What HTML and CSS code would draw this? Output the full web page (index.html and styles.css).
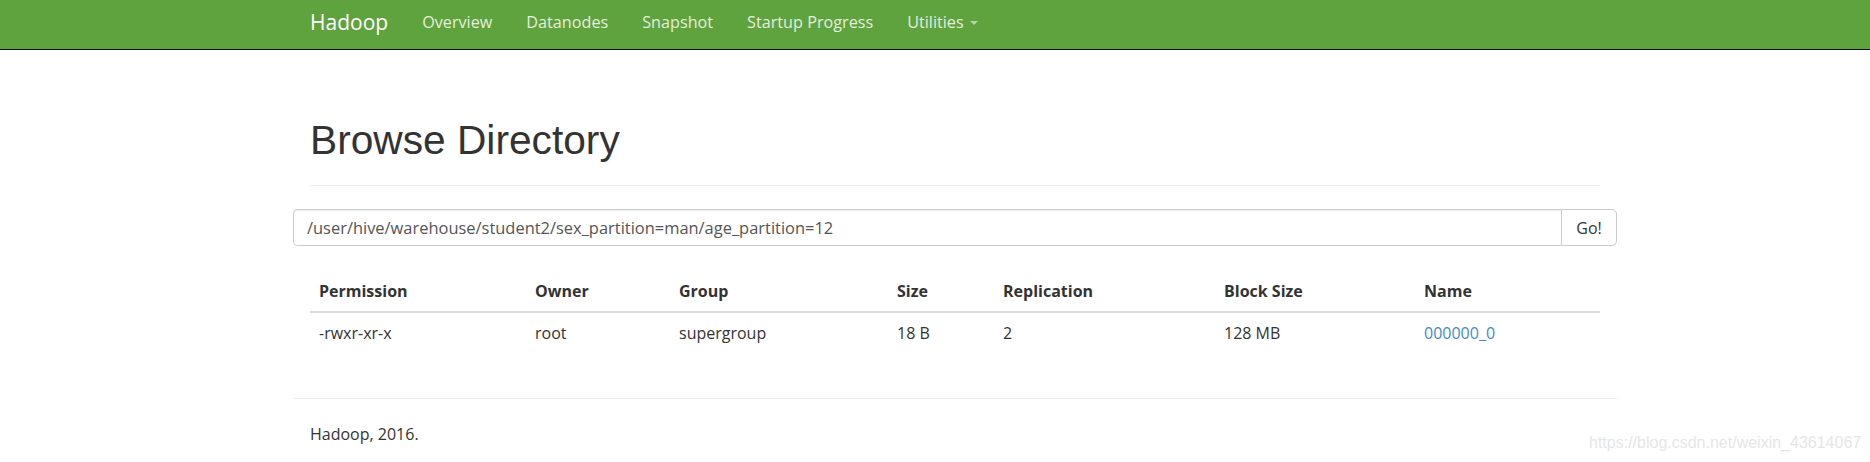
FILE: index.html
```html
<!DOCTYPE html>
<html lang="en">
<head>
<meta charset="utf-8">
<title>Browsing HDFS</title>
<link rel="stylesheet" href="styles.css">
</head>
<body>
<header class="navbar">
  <div class="container nav-inner">
    <a class="brand" href="#">Hadoop</a>
    <ul class="nav">
      <li><a href="#">Overview</a></li>
      <li><a href="#">Datanodes</a></li>
      <li><a href="#">Snapshot</a></li>
      <li><a href="#">Startup Progress</a></li>
      <li><a href="#" class="dropdown">Utilities <span class="caret"></span></a></li>
    </ul>
  </div>
</header>

<main class="container">
  <div class="page-header">
    <h1>Browse Directory</h1>
  </div>

  <form class="input-group">
    <input class="path-input" type="text" value="/user/hive/warehouse/student2/sex_partition=man/age_partition=12">
    <button class="go-btn" type="button">Go!</button>
  </form>

  <div class="table-wrap">
    <table class="listing">
      <thead>
        <tr>
          <th class="c-perm">Permission</th>
          <th class="c-owner">Owner</th>
          <th class="c-group">Group</th>
          <th class="c-size">Size</th>
          <th class="c-rep">Replication</th>
          <th class="c-block">Block Size</th>
          <th class="c-name">Name</th>
        </tr>
      </thead>
      <tbody>
        <tr>
          <td>-rwxr-xr-x</td>
          <td>root</td>
          <td>supergroup</td>
          <td>18 B</td>
          <td>2</td>
          <td>128 MB</td>
          <td><a href="#">000000_0</a></td>
        </tr>
      </tbody>
    </table>
  </div>

  <hr class="footer-rule">
  <footer class="footer">Hadoop, 2016.</footer>
</main>

<div class="watermark">https://blog.csdn.net/weixin_43614067</div>
</body>
</html>
```

FILE: styles.css
```css
html, body {
  margin: 0;
  padding: 0;
}

body {
  font-family: "Open Sans", "Noto Sans", sans-serif;
  font-size: 16px;
  line-height: 22px;
  color: #333;
  background: #fff;
  position: relative;
  min-height: 462px;
}

a {
  color: #428bca;
  text-decoration: none;
}

.container {
  width: 1324px;
  margin-left: 293px;
  box-sizing: border-box;
}

/* Navbar */
.navbar {
  background: #5fa33e;
  height: 49px;
  border-bottom: 1px solid #111;
}

.nav-inner {
  display: flex;
  align-items: center;
  height: 49px;
  padding: 0 17px;
  padding-bottom: 6px;
  box-sizing: border-box;
}

.brand {
  color: #fff;
  font-size: 21px;
  line-height: 24px;
  padding-right: 17px;
}

.nav {
  display: flex;
  list-style: none;
  margin: 0;
  padding: 0;
}

.nav a {
  display: block;
  color: #e4eedd;
  font-size: 16.2px;
  line-height: 22px;
  padding: 0 17px;
}

.caret {
  display: inline-block;
  width: 0;
  height: 0;
  margin-left: 2px;
  vertical-align: middle;
  border-top: 4px solid #b5d4a5;
  border-left: 4px solid transparent;
  border-right: 4px solid transparent;
}

/* Page header */
.page-header {
  margin: 68px 17px 0;
  padding-bottom: 22px;
  border-bottom: 1px solid #eee;
}

.page-header h1 {
  margin: 0;
  font-family: "Liberation Sans", Arial, sans-serif;
  font-weight: normal;
  font-size: 40.7px;
  line-height: 45px;
  color: #333;
}

/* Input group */
.input-group {
  display: flex;
  margin: 23px 0 0;
  height: 37px;
}

.path-input {
  flex: 1;
  height: 37px;
  box-sizing: border-box;
  border: 1px solid #ccc;
  border-right: none;
  border-radius: 5px 0 0 5px;
  padding: 0 13px;
  font-family: "Open Sans", "Noto Sans", sans-serif;
  font-size: 16.45px;
  color: #555;
  box-shadow: inset 0 1px 1px rgba(0, 0, 0, 0.075);
  outline: none;
}

.go-btn {
  width: 56px;
  height: 37px;
  box-sizing: border-box;
  border: 1px solid #ccc;
  border-radius: 0 5px 5px 0;
  background: #fff;
  color: #333;
  font-family: "Open Sans", "Noto Sans", sans-serif;
  font-size: 16px;
  padding: 0;
}

/* Table */
.table-wrap {
  padding: 0 17px;
  margin-top: 25px;
}

.listing {
  width: 100%;
  border-collapse: collapse;
  table-layout: fixed;
}

.listing th,
.listing td {
  text-align: left;
  padding: 9px 9px;
  line-height: 22px;
  vertical-align: top;
  box-sizing: border-box;
}

.listing th {
  font-weight: bold;
  border-bottom: 2px solid #ddd;
}

.c-perm { width: 216px; }
.c-owner { width: 144px; }
.c-group { width: 218px; }
.c-size { width: 106px; }
.c-rep { width: 221px; }
.c-block { width: 200px; }
.c-name { width: 185px; }

/* Footer */
.footer-rule {
  margin: 45px 0 0;
  border: 0;
  border-top: 1px solid #eee;
  height: 0;
}

.footer {
  padding: 24px 17px 0;
  line-height: 22px;
}

/* Watermark overlay */
.watermark {
  position: absolute;
  left: 1589px;
  top: 432px;
  font-family: "Liberation Sans", Arial, sans-serif;
  font-size: 16px;
  line-height: 22px;
  color: #e6e6e6;
  white-space: nowrap;
}
```
